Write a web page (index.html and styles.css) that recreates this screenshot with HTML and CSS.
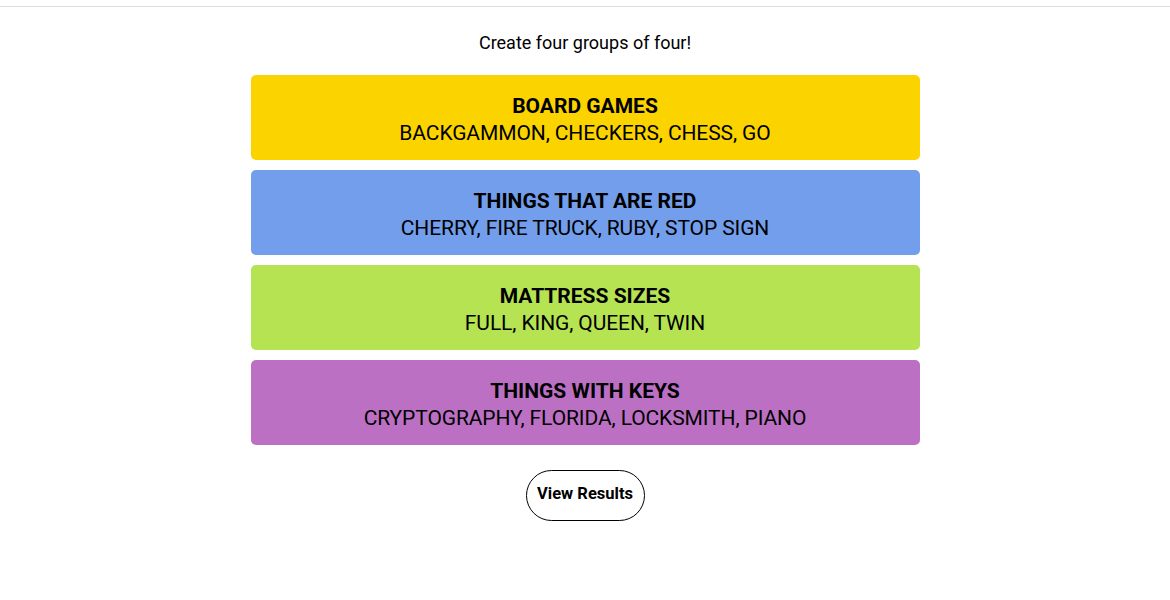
FILE: index.html
```html
<!DOCTYPE html>
<html>
<head>
<meta charset="utf-8">
<link rel="stylesheet" href="styles.css">
</head>
<body>
<div class="topbar"></div>
<main class="game">
  <p class="prompt">Create four groups of four!</p>
  <section class="groups">
    <div class="group yellow">
      <h3 class="title">BOARD GAMES</h3>
      <p class="items">BACKGAMMON, CHECKERS, CHESS, GO</p>
    </div>
    <div class="group blue">
      <h3 class="title">THINGS THAT ARE RED</h3>
      <p class="items">CHERRY, FIRE TRUCK, RUBY, STOP SIGN</p>
    </div>
    <div class="group green">
      <h3 class="title">MATTRESS SIZES</h3>
      <p class="items">FULL, KING, QUEEN, TWIN</p>
    </div>
    <div class="group purple">
      <h3 class="title">THINGS WITH KEYS</h3>
      <p class="items">CRYPTOGRAPHY, FLORIDA, LOCKSMITH, PIANO</p>
    </div>
  </section>
  <div class="actions">
    <button class="results">View Results</button>
  </div>
</main>
</body>
</html>
```
FILE: styles.css
```css
html, body {
  margin: 0;
  padding: 0;
  background: #fff;
  font-family: "Roboto", "Liberation Sans", sans-serif;
  color: #000;
}
.topbar {
  height: 6px;
  border-bottom: 1px solid #dcdcdc;
}
.game {
  width: 669px;
  margin: 0 auto;
  display: flex;
  flex-direction: column;
  align-items: stretch;
}
.prompt {
  margin: 25px 0 0;
  text-align: center;
  font-size: 18px;
  line-height: 22px;
  color: #000;
}
.groups {
  margin-top: 21px;
  display: flex;
  flex-direction: column;
  gap: 10px;
}
.group {
  height: 85px;
  box-sizing: border-box;
  padding-top: 3px;
  border-radius: 5px;
  display: flex;
  flex-direction: column;
  justify-content: center;
  align-items: center;
}
.yellow { background: #fbd400; }
.blue { background: #729eeb; }
.green { background: #b5e352; }
.purple { background: #bc70c4; }
.title {
  margin: 0 0 1px;
  font-size: 21px;
  line-height: 26px;
  font-weight: 700;
}
.items {
  margin: 0;
  font-size: 21px;
  line-height: 26px;
  font-weight: 400;
  letter-spacing: -0.1px;
}
.actions {
  display: flex;
  justify-content: center;
  margin-top: 25px;
}
.results {
  width: 119px;
  height: 51px;
  border: 1px solid #000;
  border-radius: 26px;
  background: #fff;
  font-family: inherit;
  font-size: 16.5px;
  line-height: 20px;
  font-weight: 700;
  color: #000;
  padding: 0 0 3px;
  cursor: pointer;
}
```
